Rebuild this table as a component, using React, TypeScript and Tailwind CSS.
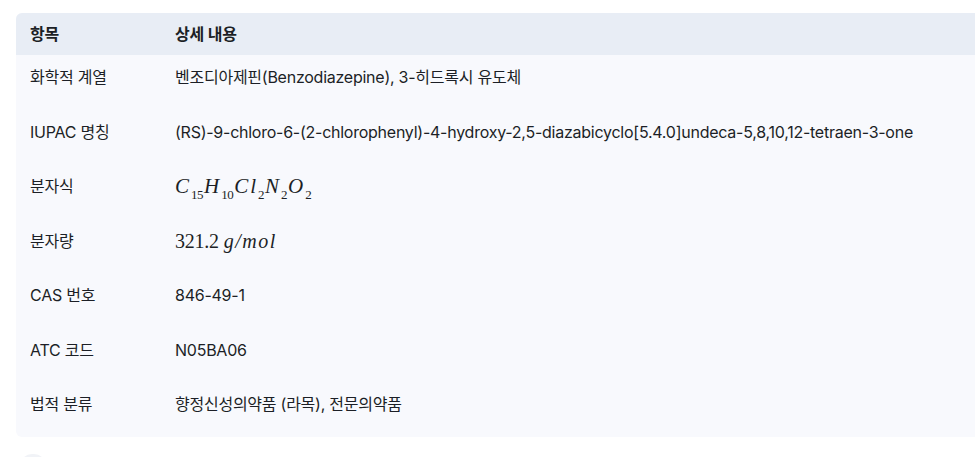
import React from "react";

const serif = { fontFamily: '"Liberation Serif", "DejaVu Serif", serif' };
const Sub = ({ c }: { c: string }) => (
  <sub className="not-italic text-[13px] align-[-3px] tracking-[-0.5px] mr-[1px]">{c}</sub>
);

const rows: { k: string; v: React.ReactNode }[] = [
  { k: "화학적 계열", v: "벤조디아제핀(Benzodiazepine), 3-히드록시 유도체" },
  { k: "IUPAC 명칭", v: "(RS)-9-chloro-6-(2-chlorophenyl)-4-hydroxy-2,5-diazabicyclo[5.4.0]undeca-5,8,10,12-tetraen-3-one" },
  {
    k: "분자식",
    v: (
      <span className="text-[21px] italic leading-5 tracking-[2px]" style={serif}>
        C<Sub c="15" />H<Sub c="10" />Cl<Sub c="2" />N<Sub c="2" />O<Sub c="2" />
      </span>
    ),
  },
  {
    k: "분자량",
    v: (
      <span className="text-[20px] leading-5" style={serif}>
        321.2<span className="ml-[5px] italic tracking-[1.5px]">g/mol</span>
      </span>
    ),
  },
  { k: "CAS 번호", v: "846-49-1" },
  { k: "ATC 코드", v: "N05BA06" },
  { k: "법적 분류", v: "향정신성의약품 (라목), 전문의약품" },
];

export default function App() {
  return (
    <div
      className="w-[975px] h-[457px] overflow-hidden bg-white pl-4 pt-[13px] text-[16px] tracking-[-0.25px] text-[#1c1f26]"
      style={{ fontFamily: 'Inter, "Noto Sans CJK KR", sans-serif' }}
    >
      <div className="rounded-l-md overflow-hidden bg-[#f8f9fd]">
        <div className="flex h-[42px] items-center bg-[#e8edf5] font-semibold">
          <div className="w-[145px] pl-[14px]">항목</div>
          <div className="pl-[14px]">상세 내용</div>
        </div>
        {rows.map((r) => (
          <div key={r.k} className="flex h-[54.5px] pt-[12px] leading-5">
            <div className="w-[145px] shrink-0 pl-[14px]">{r.k}</div>
            <div className="pl-[14px] whitespace-nowrap">{r.v}</div>
          </div>
        ))}
      </div>
      <div className="ml-[4px] mt-[17px] h-[24px] w-[26px] rounded-full bg-[#f1f3f7]" />
    </div>
  );
}
